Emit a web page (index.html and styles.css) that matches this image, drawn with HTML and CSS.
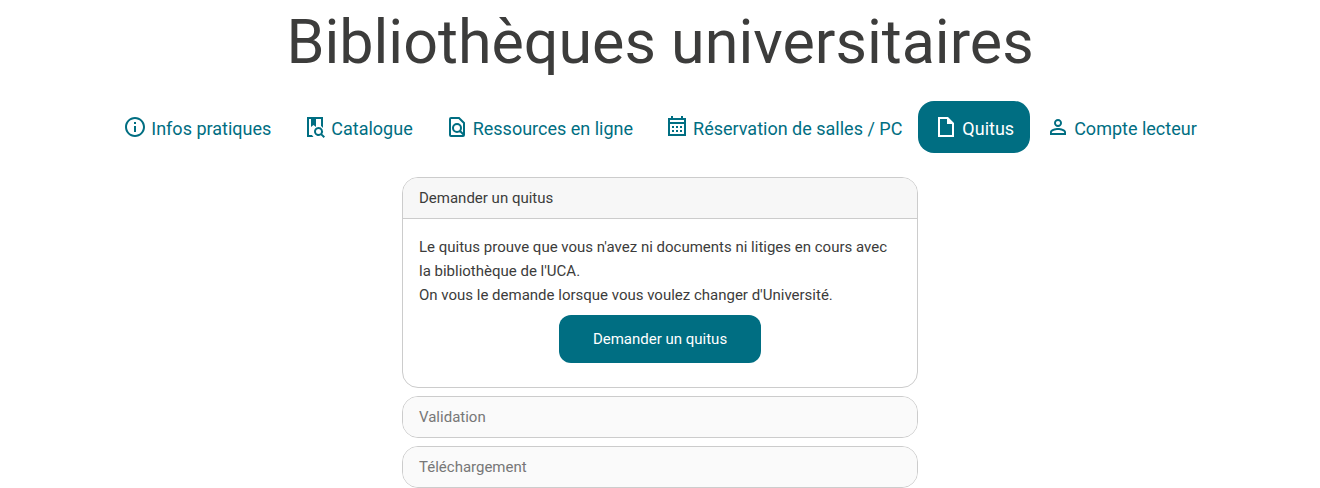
FILE: index.html
```html
<!DOCTYPE html>
<html lang="fr">
<head>
  <meta charset="UTF-8" />
  <meta name="viewport" content="width=device-width, initial-scale=1.0"/>
  <title>Bibliothèques universitaires</title>
  <link rel="stylesheet" href="styles.css">
</head>
<body>
  <header>
    <h1>Bibliothèques universitaires</h1>
    <nav class="menu">
      <a class="menu-link" href="#infos">
        <svg class="icon" viewBox="0 0 24 24"><path d="M11 7h2v2h-2zm0 4h2v6h-2zm1-9C6.480 2 2 6.480 2 12s4.480 10 10 10 10-4.480 10-10S17.520 2 12 2zm0 18c-4.410 0-8-3.590-8-8s3.590-8 8-8 8 3.590 8 8-3.590 8-8 8z"/></svg>
        <span>Infos pratiques</span>
      </a>
      <a class="menu-link" href="#catalogue">
        <svg class="icon" viewBox="0 0 24 24"><path d="M4 2h16v11a6 6 0 0 0-2-2V4h-5v8l-2.500-2L8 12V4H6v16h3a6 6 0 0 0 1.500 2H4z"/><path fill-rule="evenodd" d="M15.500 12a4.500 4.500 0 1 0 2.400 8.300l2.700 2.700 1.400-1.400-2.700-2.700A4.500 4.500 0 0 0 15.500 12zm0 2a2.500 2.500 0 1 1 0 5 2.500 2.500 0 0 1 0-5z"/></svg>
        <span>Catalogue</span>
      </a>
      <a class="menu-link" href="#ressources">
        <svg class="icon" viewBox="0 0 24 24"><path fill="none" stroke="currentColor" stroke-width="2" d="M14 3H6a1 1 0 0 0-1 1v16a1 1 0 0 0 1 1h12a1 1 0 0 0 1-1V8zM12 9a4 4 0 1 0 0 8 4 4 0 1 0 0-8M15 16l4 4"/></svg>
        <span>Ressources en ligne</span>
      </a>
      <a class="menu-link" href="#reservation">
        <svg class="icon" viewBox="0 0 24 24"><path fill-rule="evenodd" d="M6 1h2v2h8V1h2v2h3v18H3V3h3zM5 5v2h14V5zm0 4v10h14V9zm2 2h2v2H7zm4 0h2v2h-2zm4 0h2v2h-2zm-8 4h2v2H7zm4 0h2v2h-2zm4 0h2v2h-2z"/></svg>
        <span>Réservation de salles / PC</span>
      </a>
      <a class="menu-link active" href="#quitus" aria-current="page">
        <svg class="icon" viewBox="0 0 24 24"><path fill-rule="evenodd" d="M4 2h10l6 6v14H4zm2 2v16h12V9h-5V4z"/></svg>
        <span>Quitus</span>
      </a>
      <a class="menu-link" href="#compte">
        <svg class="icon" viewBox="0 0 24 24"><path d="M12 5.900a2.100 2.100 0 1 1 0 4.200 2.100 2.100 0 0 1 0-4.200m0 9c2.970 0 6.100 1.460 6.100 2.100v1.100H5.900V17c0-.64 3.130-2.100 6.100-2.100M12 4C9.790 4 8 5.790 8 8s1.790 4 4 4 4-1.790 4-4-1.790-4-4-4zm0 9c-2.670 0-8 1.340-8 4v3h16v-3c0-2.660-5.330-4-8-4z"/></svg>
        <span>Compte lecteur</span>
      </a>
    </nav>
  </header>

  <main class="steps">
    <section class="card">
      <h2 class="card-header">Demander un quitus</h2>
      <div class="card-body">
        <p>Le quitus prouve que vous n'avez ni documents ni litiges en cours avec la bibliothèque de l'UCA.<br>
        On vous le demande lorsque vous voulez changer d'Université.</p>
        <button type="button" class="btn">Demander un quitus</button>
      </div>
    </section>
    <section class="card disabled">
      <h2 class="card-header">Validation</h2>
    </section>
    <section class="card disabled">
      <h2 class="card-header">Téléchargement</h2>
    </section>
  </main>
</body>
</html>
```
FILE: styles.css
```css
* {
  box-sizing: border-box;
}

body {
  margin: 0;
  font-family: Roboto, Arial, sans-serif;
  font-size: 15px;
  line-height: 24px;
  color: #3c3c3b;
  background-color: #fff;
}

h1 {
  margin: 0;
  padding: 2px 0 19px;
  font-size: 61px;
  font-weight: 400;
  line-height: 80px;
  text-align: center;
}

.menu {
  display: flex;
  flex-wrap: wrap;
  justify-content: center;
}

.menu-link {
  display: flex;
  align-items: center;
  gap: 4px;
  padding: 12px 16px;
  border-radius: 16px;
  font-size: 18px;
  color: #006e82;
  text-decoration: none;
}

.menu-link span {
  padding-top: 4px;
}

.menu-link.active {
  background-color: #006e82;
  color: #fff;
}

.icon {
  width: 24px;
  height: 24px;
  fill: currentColor;
}

.steps {
  display: flex;
  flex-direction: column;
  gap: 8px;
  max-width: 516px;
  margin: 24px auto 0;
}

.card {
  border: 1px solid #ccc;
  border-radius: 16px;
  overflow: hidden;
}

.card-header {
  margin: 0;
  padding: 8px 16px;
  font-size: 15px;
  font-weight: normal;
  background-color: #f7f7f7;
}

.card-body {
  padding: 16px 16px 24px;
  border-top: 1px solid #ccc;
  text-align: center;
}

.card-body p {
  margin: 0 0 8px;
  text-align: left;
}

.btn {
  display: block;
  margin: 0 auto;
  padding: 12px 34px;
  border: none;
  border-radius: 12px;
  background-color: #006e82;
  color: #fff;
  font: inherit;
  cursor: pointer;
}

.disabled .card-header {
  background-color: #fafafa;
  color: #777;
}
```
